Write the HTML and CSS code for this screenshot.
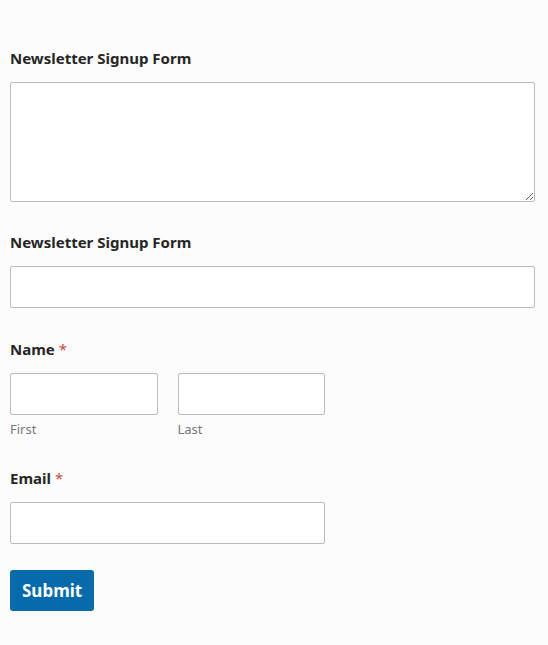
FILE: index.html
```html
<!DOCTYPE html>
<html lang="en">
<head>
  <meta charset="UTF-8">
  <meta name="viewport" content="width=device-width, initial-scale=1.0">
  <title>Newsletter Signup Form</title>
  <link rel="stylesheet" href="styles.css">
</head>
<body>

  <!-- Signup form -->
  <form class="signup-form" onsubmit="return false">
    <div class="field">
      <label class="field-label" for="intro">Newsletter Signup Form</label>
      <textarea id="intro" class="field-large"></textarea>
    </div>

    <div class="field">
      <label class="field-label" for="topic">Newsletter Signup Form</label>
      <input type="text" id="topic" class="field-large">
    </div>

    <div class="field field-name">
      <label class="field-label" for="first">Name <span class="required">*</span></label>
      <div class="name-row">
        <div class="name-part">
          <input type="text" id="first">
          <span class="sublabel">First</span>
        </div>
        <div class="name-part">
          <input type="text" id="last">
          <span class="sublabel">Last</span>
        </div>
      </div>
    </div>

    <div class="field">
      <label class="field-label" for="email">Email <span class="required">*</span></label>
      <input type="email" id="email" class="field-medium">
    </div>

    <div class="submit-row">
      <button type="submit" class="submit-btn">Submit</button>
    </div>
  </form>

</body>
</html>
```

FILE: styles.css
```css
/* Reset and base */
* { margin: 0; padding: 0; box-sizing: border-box; }
body {
  background: #fcfcfc;
  font-family: "Noto Sans", "Open Sans", Arial, sans-serif;
  color: #262626;
}

/* Form wrapper */
.signup-form {
  padding: 33px 13px 30px 10px;
}

.field {
  padding: 15px 0;
}
.field-name { padding-top: 16px; }

.field-label {
  display: block;
  font-size: 15px;
  font-weight: bold;
  line-height: 20px;
  margin-bottom: 14px;
}
.required {
  color: #c9494a;
  font-weight: normal;
}

/* Inputs */
input, textarea {
  display: block;
  width: 100%;
  height: 42px;
  background: #fff;
  border: 1px solid #bbb;
  border-radius: 2px;
  font-family: inherit;
  font-size: 15px;
  padding: 6px 10px;
  outline: none;
}
textarea {
  height: 120px;
  resize: vertical;
}
.field-medium { width: 60%; }

/* Name row */
.name-row {
  display: flex;
  gap: 20px;
  width: 60%;
}
.name-part { flex: 1; }
.sublabel {
  display: block;
  margin-top: 6px;
  font-size: 13px;
  line-height: 17px;
  color: #777;
}

/* Submit */
.submit-row {
  padding-top: 11px;
}
.submit-btn {
  background: #066aab;
  color: #fff;
  border: none;
  border-radius: 3px;
  height: 41px;
  padding: 0 12px;
  font-family: inherit;
  font-size: 17px;
  font-weight: bold;
  cursor: pointer;
}
.submit-btn:hover { background: #055a91; }
```
